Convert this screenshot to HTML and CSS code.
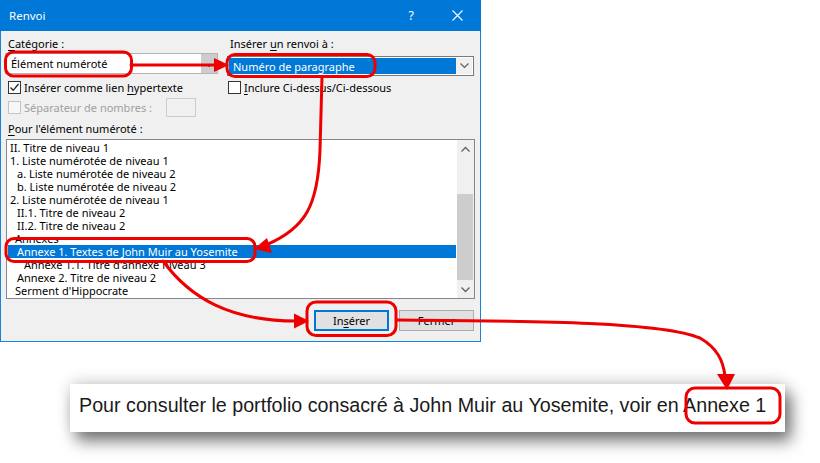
FILE: index.html
```html
<!DOCTYPE html>
<html lang="fr">
<head>
    <meta charset="UTF-8">
    <meta name="viewport" content="width=device-width, initial-scale=1.0">
    <title>Renvoi</title>
    <link rel="stylesheet" href="styles.css">
</head>
<body>
    <div class="dialog">
        <div class="titlebar">
            <span class="title">Renvoi</span>
            <span class="help">?</span>
            <svg class="close" width="11" height="11" viewBox="0 0 11 11">
                <path d="M0.5 0.5 L10.5 10.5 M10.5 0.5 L0.5 10.5" stroke="#fff" stroke-width="1.1"/>
            </svg>
        </div>

        <div class="dialog-body">
            <div class="top">
                <div class="col">
                    <div class="label"><u>C</u>atégorie :</div>
                    <div class="combo combo-left">
                        <span class="combo-text">Élément numéroté</span>
                        <span class="combo-btn gray"><span class="tiny-arrow"></span></span>
                    </div>
                    <label class="check-row">
                        <span class="box checked">
                            <svg width="11" height="11" viewBox="0 0 11 11"><path d="M1.5 5.5 L4.2 8.3 L9.5 2" fill="none" stroke="#222" stroke-width="1.3"/></svg>
                        </span>
                        <span>Insérer comme lien <u>h</u>ypertexte</span>
                    </label>
                    <div class="check-row disabled">
                        <span class="box"></span>
                        <span>Séparateur de nombres :</span>
                        <span class="small-input"></span>
                    </div>
                </div>

                <div class="col">
                    <div class="label">Insérer <u>u</u>n renvoi à :</div>
                    <div class="combo combo-right">
                        <span class="combo-text selected">Numéro de paragraphe</span>
                        <span class="combo-btn">
                            <svg width="9" height="6" viewBox="0 0 9 6"><path d="M0.5 0.5 L4.5 4.5 L8.5 0.5" fill="none" stroke="#606060" stroke-width="1.2"/></svg>
                        </span>
                    </div>
                    <label class="check-row right-check">
                        <span class="box"></span>
                        <span><u>I</u>nclure Ci-dessus/Ci-dessous</span>
                    </label>
                </div>
            </div>

            <div class="label list-label"><u>P</u>our l'élément numéroté :</div>
            <div class="listbox">
                <ul class="items">
                    <li class="lv0">II. Titre de niveau 1</li>
                    <li class="lv0">1. Liste numérotée de niveau 1</li>
                    <li class="lv1">a. Liste numérotée de niveau 2</li>
                    <li class="lv1">b. Liste numérotée de niveau 2</li>
                    <li class="lv0">2. Liste numérotée de niveau 1</li>
                    <li class="lv1">II.1. Titre de niveau 2</li>
                    <li class="lv1">II.2. Titre de niveau 2</li>
                    <li class="lvh">Annexes</li>
                    <li class="lv1 active">Annexe 1. Textes de John Muir au Yosemite</li>
                    <li class="lv2">Annexe 1.1. Titre d'annexe niveau 3</li>
                    <li class="lv1">Annexe 2. Titre de niveau 2</li>
                    <li class="lvh">Serment d'Hippocrate</li>
                </ul>
                <div class="scrollbar">
                    <div class="sb-btn">
                        <svg width="9" height="6" viewBox="0 0 9 6"><path d="M0.5 5.5 L4.5 1.5 L8.5 5.5" fill="none" stroke="#606060" stroke-width="1.3"/></svg>
                    </div>
                    <div class="sb-track"><div class="sb-thumb"></div></div>
                    <div class="sb-btn">
                        <svg width="9" height="6" viewBox="0 0 9 6"><path d="M0.5 0.5 L4.5 4.5 L8.5 0.5" fill="none" stroke="#606060" stroke-width="1.3"/></svg>
                    </div>
                </div>
            </div>

            <div class="buttons">
                <button class="btn default">In<u>s</u>érer</button>
                <button class="btn">Fermer</button>
            </div>
        </div>
    </div>

    <div class="doc-line">
        Pour consulter le portfolio consacré à John Muir au Yosemite, voir en Annexe 1
    </div>

    <!-- red callouts drawn over the screenshot -->
    <svg class="annotations" width="820" height="463" viewBox="0 0 820 463">
        <g fill="none" stroke="#ee0000" stroke-width="3" stroke-linecap="round">
            <rect x="5.5" y="52" width="126" height="24" rx="8"/>
            <path d="M131 65 L216 65"/>
            <rect x="227" y="54.5" width="148" height="22" rx="8"/>
            <path d="M322 77 L320 150 C318 205 306 228 266 245"/>
            <rect x="6" y="238.5" width="249" height="23" rx="8"/>
            <path d="M163 261 C190 298 230 321 296 321"/>
            <rect x="307" y="302" width="89" height="33.5" rx="9"/>
            <path d="M397 320 C520 321 660 321 700 338 C717 348 723 360 725 376"/>
            <rect x="686" y="388" width="94" height="35" rx="9"/>
        </g>
        <g fill="#ee0000">
            <polygon points="214,58 229,65 214,72"/>
            <polygon points="254,249 267,238 272,253"/>
            <polygon points="294,313.5 309,321 294,328.5"/>
            <polygon points="717,374 727,390 735,374"/>
        </g>
    </svg>
</body>
</html>
```

FILE: styles.css
```css
body {
    margin: 0;
    width: 820px;
    height: 463px;
    position: relative;
    background: #fff;
    font-family: 'Noto Sans', 'Open Sans', sans-serif;
    font-size: 11px;
    color: #000;
    overflow: hidden;
}

u {
    text-decoration-thickness: 1px;
    text-underline-offset: 2px;
}

.dialog {
    width: 481px;
    height: 342px;
    box-sizing: border-box;
    border: 1px solid #1883d7;
    border-top: none;
    background: #f0f0f0;
}

.titlebar {
    height: 31px;
    background: #0078d7;
    color: #fff;
    display: flex;
    align-items: center;
    padding-left: 9px;
    margin: 0 -1px;
}

.title {
    flex: 1;
    font-size: 11.5px;
}

.help {
    font-size: 12.5px;
    margin-right: 38px;
}

.close {
    margin-right: 18px;
}

.dialog-body {
    padding: 5px 0 0 4px;
}

.top {
    display: grid;
    grid-template-columns: 213px 247px;
    column-gap: 9px;
}

.label {
    height: 15px;
    line-height: 15px;
    padding-left: 3px;
}

.combo {
    display: flex;
    background: #fff;
    box-sizing: border-box;
}

.combo-left {
    margin-top: 2px;
    height: 21px;
    border: 1px solid #b4b4b4;
}

.combo-right {
    margin-top: 5px;
    height: 20px;
    border: 1px solid #7a7a7a;
    padding: 1px;
}

.combo-text {
    flex: 1;
    display: flex;
    align-items: center;
    padding-left: 5px;
}

.combo-text.selected {
    background: #0078d7;
    color: #fff;
    padding-left: 4px;
}

.combo-btn {
    width: 16px;
    display: flex;
    align-items: center;
    justify-content: center;
    background: #f0f0f0;
}

.combo-btn.gray {
    background: #cccccc;
}

.tiny-arrow {
    width: 2px;
    height: 2px;
    background: #666;
    margin-top: 4px;
}

.check-row {
    display: flex;
    align-items: center;
    gap: 3px;
    height: 16px;
    margin-top: 5px;
    padding-left: 3px;
}

.right-check {
    margin-top: 3px;
    padding-left: 1px;
}

.box {
    width: 13px;
    height: 13px;
    box-sizing: border-box;
    border: 1px solid #333;
    background: #fff;
    display: flex;
    align-items: center;
    justify-content: center;
}

.check-row.disabled {
    height: 21px;
    margin-top: 2px;
    color: #a0a0a0;
}

.check-row.disabled .box {
    border-color: #c4c4c4;
    background: #f7f7f7;
}

.small-input {
    width: 30px;
    height: 19px;
    box-sizing: border-box;
    border: 1px solid #cccccc;
    margin-left: 11px;
}

.list-label {
    margin-top: 3px;
}

.listbox {
    display: flex;
    margin: 3px 0 0 1px;
    width: 469px;
    height: 160px;
    box-sizing: border-box;
    border: 1px solid #828790;
    background: #fff;
}

.items {
    flex: 1;
    list-style: none;
    margin: 0;
    padding: 1px 1px 0 1px;
}

.items li {
    height: 13px;
    line-height: 13px;
    white-space: nowrap;
}

.lv0 { padding-left: 2px; }
.lvh { padding-left: 7px; }
.lv1 { padding-left: 9px; }
.lv2 { padding-left: 16px; }

.items li.active {
    background: #0078d7;
    color: #fff;
}

.scrollbar {
    width: 17px;
    display: flex;
    flex-direction: column;
    background: #f0f0f0;
}

.sb-btn {
    height: 17px;
    display: flex;
    align-items: center;
    justify-content: center;
}

.sb-track {
    flex: 1;
}

.sb-thumb {
    margin: 37px 1px 0 0;
    height: 86px;
    background: #cdcdcd;
}

.buttons {
    display: flex;
    justify-content: flex-end;
    gap: 10px;
    margin: 11px 6px 0 0;
}

.btn {
    width: 75px;
    height: 21px;
    box-sizing: border-box;
    border: 1px solid #adadad;
    background: #e1e1e1;
    font-family: inherit;
    font-size: 11px;
    color: #000;
    padding: 0;
}

.btn.default {
    border: 2px solid #0078d7;
}

.doc-line {
    margin: 42px 0 0 70px;
    width: 715px;
    height: 48px;
    box-sizing: border-box;
    padding: 0 0 5px 9px;
    display: flex;
    align-items: center;
    background: #fff;
    font-family: 'Liberation Sans', Arial, sans-serif;
    font-size: 19.7px;
    color: #1a1a1a;
    white-space: nowrap;
    box-shadow: 6px 9px 16px rgba(0, 0, 0, 0.55), 0 -4px 14px rgba(0, 0, 0, 0.12);
}

.annotations {
    position: absolute;
    top: 0;
    left: 0;
    pointer-events: none;
}
```
